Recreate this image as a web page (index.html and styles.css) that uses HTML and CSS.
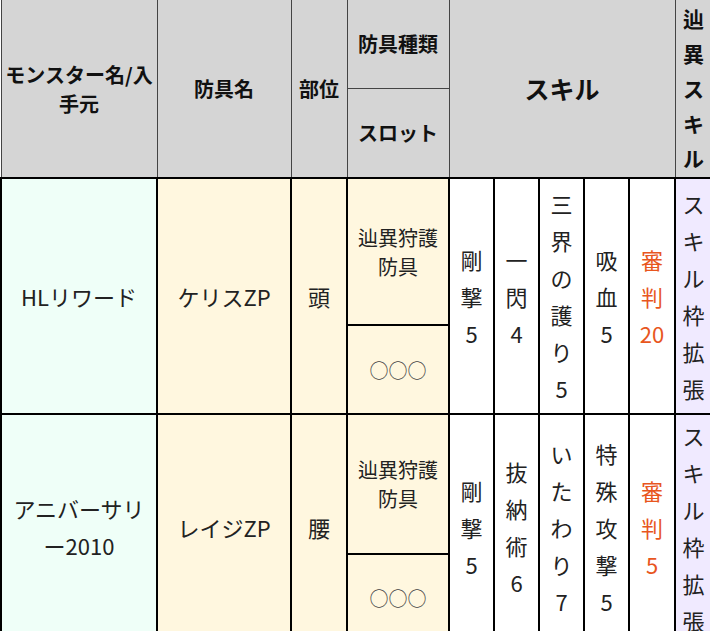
FILE: index.html
```html
<!DOCTYPE html>
<html lang="ja">
<head>
<meta charset="utf-8">
<title>防具一覧</title>
<link rel="stylesheet" href="styles.css">
</head>
<body>
<table class="armor">
  <colgroup>
    <col class="c-src">
    <col class="c-name">
    <col class="c-part">
    <col class="c-type">
    <col class="c-skill">
    <col class="c-skill">
    <col class="c-skill">
    <col class="c-skill">
    <col class="c-skill c-last">
    <col class="c-ext">
  </colgroup>
  <thead>
    <tr class="h1">
      <th rowspan="2">モンスター名/入手元</th>
      <th rowspan="2">防具名</th>
      <th rowspan="2">部位</th>
      <th>防具種類</th>
      <th rowspan="2" colspan="5" class="skill-head">スキル</th>
      <th rowspan="2" class="ext-head">辿異スキル</th>
    </tr>
    <tr class="h2">
      <th>スロット</th>
    </tr>
  </thead>
  <tbody>
    <tr class="r1">
      <td rowspan="2" class="src">HLリワード</td>
      <td rowspan="2" class="name">ケリスZP</td>
      <td rowspan="2" class="name">頭</td>
      <td class="type">辿異狩護防具</td>
      <td rowspan="2" class="sk">剛撃5</td>
      <td rowspan="2" class="sk">一閃4</td>
      <td rowspan="2" class="sk">三界の護り5</td>
      <td rowspan="2" class="sk">吸血5</td>
      <td rowspan="2" class="sk hl">審判20</td>
      <td rowspan="2" class="ext">スキル枠拡張</td>
    </tr>
    <tr class="r2">
      <td class="slot">○○○</td>
    </tr>
    <tr class="r1 g2">
      <td rowspan="2" class="src">アニバーサリー2010</td>
      <td rowspan="2" class="name">レイジZP</td>
      <td rowspan="2" class="name">腰</td>
      <td class="type">辿異狩護防具</td>
      <td rowspan="2" class="sk">剛撃5</td>
      <td rowspan="2" class="sk">抜納術6</td>
      <td rowspan="2" class="sk">いたわり7</td>
      <td rowspan="2" class="sk">特殊攻撃5</td>
      <td rowspan="2" class="sk hl">審判5</td>
      <td rowspan="2" class="ext">スキル枠拡張</td>
    </tr>
    <tr class="r2 g2">
      <td class="slot">○○○</td>
    </tr>
  </tbody>
</table>
</body>
</html>
```

FILE: styles.css
```css
html, body {
  margin: 0;
  padding: 0;
  overflow: hidden;
  background: #fff;
}

body {
  font-family: "Noto Sans CJK JP", "Noto Sans", sans-serif;
  color: #222;
}

.armor {
  border-collapse: collapse;
  table-layout: fixed;
  width: 711px;
}

.c-src { width: 156px; }
.c-name { width: 134px; }
.c-part { width: 56px; }
.c-type { width: 102px; }
.c-skill { width: 45px; }
.c-last { width: 46px; }
.c-ext { width: 37px; }

th {
  background: #d5d5d5;
  border: 1px solid #444;
  border-top: none;
  color: #111;
  font-weight: 700;
  font-size: 20px;
  line-height: 29px;
  padding: 0 2px;
  text-align: center;
  vertical-align: middle;
}

.h1 { height: 88px; }
.h2 { height: 90px; }

.skill-head {
  font-size: 25px;
}

.ext-head {
  font-size: 21px;
  line-height: 35px;
  padding: 0 3px;
}

td {
  border: 2px solid #000;
  text-align: center;
  vertical-align: middle;
  font-size: 22px;
  line-height: 37px;
  padding: 6px 7px;
  background: #fff;
  color: #222;
}

.r1 { height: 146px; }
.r2 { height: 88px; }
.r1.g2 { height: 139px; }
.r2.g2 { height: 85px; }

.src { background: #effff8; padding: 6px 9px; }
.name { background: #fff7df; }
.type {
  background: #fff7df;
  font-size: 20px;
  line-height: 29px;
  padding: 4px 9px;
}
.slot {
  background: #fff7df;
  font-size: 19px;
  color: #444;
  padding: 4px 7px;
}
.sk { padding: 6px 6px; }
.g2 .sk, .g2 .src { padding-top: 1px; padding-bottom: 1px; }
.hl { color: #e8561e; }
.ext { background: #f0eaff; padding: 6px 3px; }
.g2 .ext { padding-top: 2px; padding-bottom: 0; }
```
